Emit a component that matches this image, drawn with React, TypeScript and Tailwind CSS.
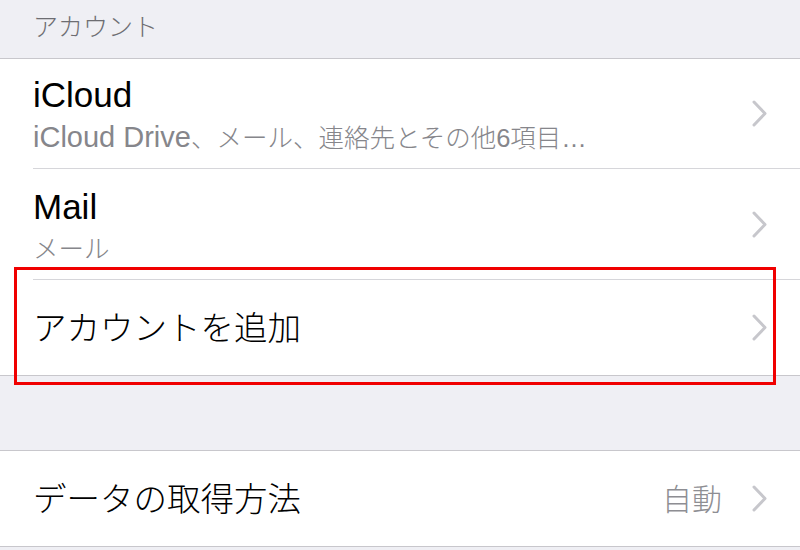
import React from "react"

function Chevron() {
  return (
    <svg width="15" height="27" viewBox="0 0 15 27" fill="none" className="shrink-0">
      <path d="M2 2 L13 13.5 L2 25" stroke="#c7c7cc" strokeWidth="3" strokeLinecap="round" strokeLinejoin="round" />
    </svg>
  )
}

interface RowProps {
  title: React.ReactNode
  subtitle?: React.ReactNode
  detail?: string
  height: string
  padTop?: string
  divider?: boolean
}

function Row({ title, subtitle, detail, height, padTop, divider }: RowProps) {
  return (
    <div className="pl-[33px]">
      <div
        className={`flex items-center pr-[33px] ${height} ${divider ? "border-b border-[#d6d6da]" : ""}`}
      >
        {subtitle ? (
          <div className={`flex flex-1 flex-col self-start ${padTop ?? ""}`}>
            <div className="text-[35px] leading-[40px] text-black">{title}</div>
            <div className="leading-[44px] text-[#86868b]">{subtitle}</div>
          </div>
        ) : (
          <div className="flex-1 pt-[3px] text-[33.5px] leading-[44px] text-black">{title}</div>
        )}
        {detail && <span className="mr-[30px] pt-[3px] text-[30px] leading-[40px] text-[#8e8e93]">{detail}</span>}
        <Chevron />
      </div>
    </div>
  )
}

export default function App() {
  return (
    <div className="relative h-[550px] w-[800px] overflow-hidden bg-[#efeff4] font-light font-['Liberation_Sans','Noto_Sans_CJK_JP',sans-serif]">
      <div className="flex h-[58px] items-center pb-[3px] pl-[33px] text-[25px] text-[#6d6d72]">アカウント</div>

      <div className="border-y border-[#c8c7cc] bg-white">
        <Row
          title="iCloud"
          subtitle={
            <>
              <span className="text-[29px]">iCloud Drive</span>
              <span className="text-[25.5px]">、メール、連絡先とその他6項目…</span>
            </>
          }
          height="h-[110px]"
          padTop="pt-[16px]"
          divider
        />
        <Row
          title="Mail"
          subtitle={<span className="text-[25.5px]">メール</span>}
          height="h-[111px]"
          padTop="pt-[18px]"
          divider
        />
        <Row title="アカウントを追加" height="h-[95px]" />
      </div>

      <div className="h-[74px]" />

      <div className="border-y border-[#c8c7cc] bg-white">
        <Row title="データの取得方法" detail="自動" height="h-[95px]" />
      </div>

      {/* highlight box drawn over the list */}
      <div className="pointer-events-none absolute left-[14px] top-[267px] h-[118px] w-[762px] border-[3px] border-[#f00000]" />
    </div>
  )
}
